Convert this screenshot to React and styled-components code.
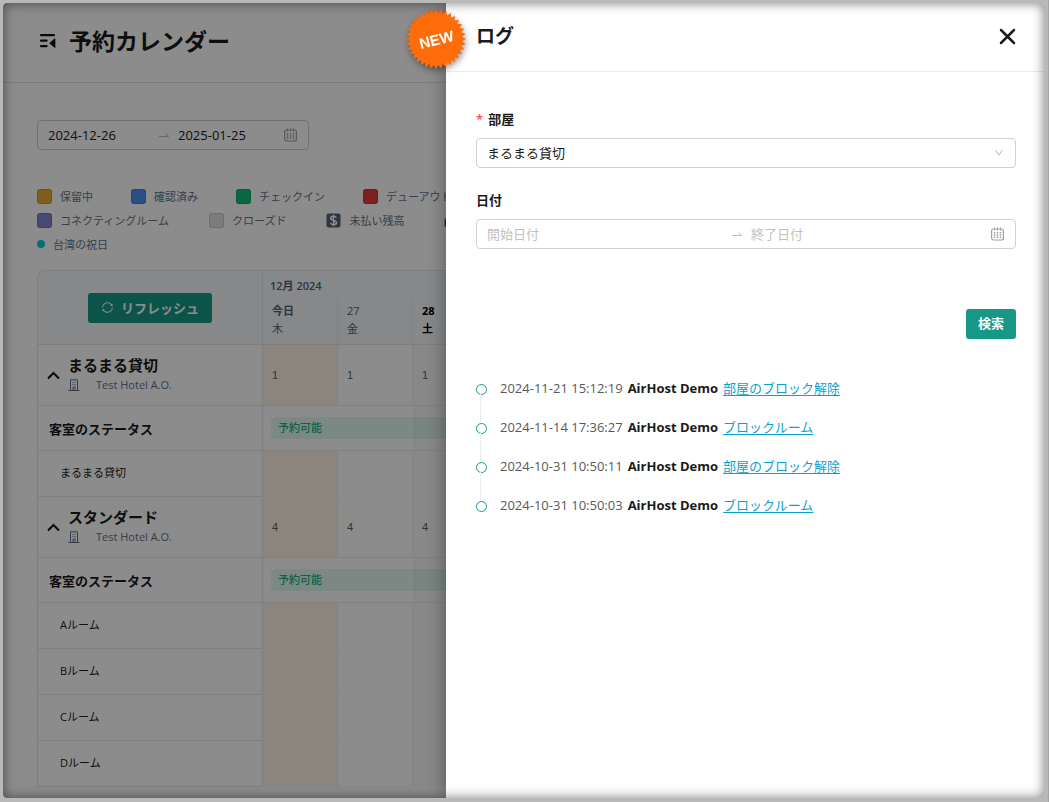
import React, {useState} from 'react'
import styled, {createGlobalStyle} from 'styled-components'
import {AiOutlineSync, AiOutlineDown} from 'react-icons/ai'

const GlobalStyle = createGlobalStyle`
  * {
    box-sizing: border-box;
  }
  body {
    margin: 0;
    font-family: "Open Sans", "Noto Sans CJK JP", sans-serif;
    font-size: 13px;
    color: #1a1a1a;
  }
  button, input, select {
    font-family: inherit;
    font-size: inherit;
    color: inherit;
  }
  h1, h2, p, ul {
    margin: 0;
    padding: 0;
  }
`

const Frame = styled.div`
  display: flex;
  min-height: 100vh;
  padding: 3px 4px 4px 3px;
  background: #b9b9b9;
  border-right: 1px solid #a6a6a6;
`

const Screen = styled.div`
  position: relative;
  flex: 1;
  min-width: 0;
  overflow: hidden;
  border-radius: 4px;
  background: #fff;
  &::after {
    content: "";
    position: absolute;
    inset: 0;
    border-radius: 4px;
    box-shadow: inset 0 0 12px rgba(0, 0, 0, .5);
    pointer-events: none;
  }
`

const PageHeader = styled.header`
  display: flex;
  align-items: center;
  gap: 13px;
  height: 80px;
  padding: 0 37px 4px;
  border-bottom: 1px solid #e2e2e2;
  h1 {
    font-size: 23px;
    line-height: 32px;
    font-weight: 700;
  }
`

const IconButton = styled.button`
  display: flex;
  padding: 0;
  border: 0;
  background: none;
  cursor: pointer;
`

const PageBody = styled.main`
  padding: 37px 0 11px 34px;
`

const Field = styled.div`
  display: flex;
  align-items: center;
  width: ${({$width}) => $width || '100%'};
  height: 30px;
  padding: 0 11px 0 10px;
  border: 1px solid #d0d0d0;
  border-radius: 4px;
  background: #fff;
  color: #1a1a1a;
  input, select {
    flex: 1;
    min-width: 0;
    height: 26px;
    padding: 0;
    border: 0;
    outline: 0;
    appearance: none;
    background: transparent;
  }
  input::placeholder {
    color: #bfbfbf;
    opacity: 1;
  }
  svg {
    flex: none;
  }
`

const Separator = styled.span`
  display: flex;
  width: 24px;
  padding-left: 4px;
`

const Legend = styled.ul`
  margin: 34px 0 14px;
  list-style: none;
  font-size: 11px;
  color: #64748b;
`

const LegendRow = styled.li`
  display: flex;
  gap: ${({$gap}) => $gap};
  height: 24px;
`

const LegendItem = styled.span`
  display: flex;
  flex: none;
  align-items: center;
  gap: 8px;
  white-space: nowrap;
`

const Swatch = styled.i`
  width: 15px;
  height: 15px;
  border: 1px solid rgba(0, 0, 0, .12);
  border-radius: 3px;
  background: ${({$color}) => $color};
`

const Dot = styled.i`
  width: 8px;
  height: 8px;
  border-radius: 50%;
  background: #06cbd8;
`

const Calendar = styled.table`
  width: 100%;
  table-layout: fixed;
  border: 1px solid #e3e6e9;
  border-width: 1px 0 0 1px;
  border-radius: 8px 0 0 0;
  border-spacing: 0;
  font-size: 11px;
  color: #556070;
  th, td {
    padding: 0;
    font-weight: 400;
    text-align: left;
  }
`

const RefreshCell = styled.th`
  border: 1px solid #e3e6e9;
  border-width: 0 1px 1px 0;
  border-radius: 8px 0 0 0;
  background: #f4f8fc;
`

const MonthCell = styled.th`
  height: 27px;
  background: #f4f8fc;
  && {
    padding-left: 7px;
    font-weight: 600;
  }
`

const DayHead = styled.th`
  height: 47px;
  border-right: 1px solid #e9ecef;
  border-bottom: 1px solid #e3e6e9;
  background: #f4f8fc;
  line-height: 18px;
  vertical-align: top;
  color: ${({$strong}) => $strong ? '#000' : 'inherit'};
  && {
    padding: 4px 0 0 9px;
    font-weight: ${({$strong}) => $strong ? 700 : 400};
  }
  b {
    display: block;
    font-weight: ${({$bold}) => $bold ? 700 : 'inherit'};
  }
`

const PrimaryButton = styled.button`
  display: flex;
  align-items: center;
  justify-content: center;
  gap: 7px;
  height: 30px;
  padding: 0 12px 3px;
  border: 0;
  border-radius: 3px;
  background: #179887;
  color: #fff;
  font-weight: 700;
  cursor: pointer;
`

const RefreshButton = styled(PrimaryButton)`
  width: 124px;
  margin: 0 auto;
  padding-bottom: 0;
  font-size: 13px;
`

const NameCell = styled.th`
  height: ${({$height}) => $height};
  border: 1px solid #e8eaec;
  border-width: 0 1px 1px 0;
`

const TypeName = styled.div`
  display: grid;
  grid-template-columns: 13px 1fr;
  column-gap: 8px;
  align-items: center;
  padding: 0 9px;
  strong {
    display: block;
    font-size: 15px;
    line-height: 20px;
    color: #1a1a1a;
  }
  p {
    display: flex;
    align-items: center;
    gap: 16px;
    line-height: 20px;
    color: #64748b;
  }
`

const StatusName = styled.strong`
  padding-left: 11px;
  font-size: 13px;
  color: #1a1a1a;
`

const RoomName = styled.div`
  padding: 0 0 3px 22px;
  color: #1a1a1a;
`

const tints = {today: '#fdf2e3', weekend: '#f7f7f7'}

const DayCell = styled.td`
  border-right: 1px solid #f0f0f0;
  border-bottom: 1px solid ${({$soft}) => $soft ? '#f9f9f9' : '#e9e9e9'};
  background: ${({$kind}) => tints[$kind] || '#fff'};
  font-family: "Liberation Sans", Arial, sans-serif;
  && {
    padding-left: 9px;
  }
`

const StatusCell = styled.td`
  border-bottom: 1px solid #e9e9e9;
  background: ${({$kind}) => tints[$kind] || '#fff'};
  && {
    padding-left: ${({$first}) => $first ? '8px' : 0};
  }
`

const StatusBar = styled.div`
  height: 22px;
  padding-left: 7px;
  border-radius: ${({$first}) => $first ? '4px 0 0 4px' : 0};
  background: rgba(20, 190, 130, .13);
  line-height: 22px;
  font-weight: 500;
  color: #14b37c;
`

const Mask = styled.div`
  position: absolute;
  inset: 0;
  background: rgba(0, 0, 0, .45);
`

const Drawer = styled.aside`
  position: absolute;
  top: 0;
  right: 0;
  bottom: 0;
  width: 598px;
  max-width: 100%;
  background: #fff;
  box-shadow: -4px 0 14px rgba(0, 0, 0, .25);
`

const DrawerHeader = styled.header`
  display: flex;
  align-items: center;
  justify-content: space-between;
  height: 69px;
  padding: 0 28px 2px 30px;
  border-bottom: 1px solid #ececec;
  h2 {
    font-size: 19px;
    line-height: 28px;
    font-weight: 600;
  }
`

const DrawerBody = styled.div`
  padding: 37px 28px 0 30px;
`

const FormItem = styled.div`
  display: flex;
  flex-direction: column;
  gap: 8px;
  margin-bottom: 22px;
  label {
    line-height: 21px;
    font-weight: 600;
  }
  em {
    margin-right: 5px;
    font-style: normal;
    color: #ff4d4f;
  }
`

const Actions = styled.div`
  display: flex;
  justify-content: flex-end;
  margin: 60px 0 29px;
`

const Timeline = styled.ul`
  list-style: none;
`

const TimelineItem = styled.li`
  position: relative;
  display: flex;
  align-items: center;
  gap: 5px;
  height: 39px;
  padding-left: 24px;
  line-height: 20px;
  white-space: nowrap;
  time {
    color: #595959;
  }
  a {
    color: #0d9fd0;
    text-underline-offset: 2px;
  }
  &::before {
    content: "";
    position: absolute;
    left: 0;
    top: 16px;
    width: 9px;
    height: 9px;
    border: 1px solid #179887;
    border-radius: 50%;
  }
  &:not(:last-child)::after {
    content: "";
    position: absolute;
    left: 4px;
    top: 26px;
    width: 1px;
    height: 28px;
    background: #ececec;
  }
`

const Badge = styled.div`
  position: absolute;
  top: 6px;
  right: 578px;
  display: grid;
  place-items: center;
  width: 60px;
  height: 60px;
  filter: drop-shadow(1px 3px 3px rgba(0, 0, 0, .4));
  svg, span {
    grid-area: 1 / 1;
  }
  span {
    font-family: "Liberation Sans", Arial, sans-serif;
    font-size: 15px;
    font-weight: 700;
    color: #fff;
    transform: rotate(-14deg);
  }
`

const FoldIcon = () => (
  <svg width="16" height="16" viewBox="0 0 16 16" fill="#111">
    <rect x="0" y="1" width="15" height="2.2" rx="1" />
    <rect x="0" y="6.6" width="7.6" height="2.2" rx="1" />
    <rect x="0" y="12" width="7.6" height="2.2" rx="1" />
    <path d="M9.2 10.2 14.6 5.6q.8-.5.8.5v8.200q0 1-.8.5z" />
  </svg>
)

const CalendarIcon = () => (
  <svg width="13" height="14" viewBox="0 0 13 14" fill="none" stroke="#a0a0a0">
    <rect x=".6" y="2" width="11.800" height="11" rx="2" strokeWidth="1.200" />
    <path d="M3.500.5v3M6.500.5v3M9.500.5v3" />
    <path d="M2.800 5.700h8M2.800 8h8M2.800 10.300h8" strokeWidth="1.400" strokeDasharray="1.500 1.450" />
  </svg>
)

const ArrowIcon = () => (
  <svg width="12" height="8" viewBox="0 0 12 8" fill="none" stroke="#bdbdbd">
    <path d="M1 5.500h9.500L7.200 2.500" />
  </svg>
)

const UpIcon = () => (
  <svg width="13" height="9" viewBox="0 0 13 9" fill="none" stroke="#111" strokeWidth="2">
    <path d="M1 7.500 6.500 2 12 7.500" />
  </svg>
)

const BuildingIcon = () => (
  <svg width="12" height="12" viewBox="0 0 12 12" fill="none" stroke="#64748b">
    <path d="M.5 11.500h11M2.500 11V.8h7V11M4.500 3.500h1M6.500 3.500h1M4.500 5.500h1M6.500 5.500h1M5 11V8h2v3" />
  </svg>
)

const CloseIcon = () => (
  <svg width="17" height="17" viewBox="0 0 17 17" stroke="#1a1a1a" strokeWidth="2.500" strokeLinecap="round">
    <path d="m2 2 13 13M15 2 2 15" />
  </svg>
)

const DollarIcon = () => (
  <svg width="15" height="15" viewBox="0 0 15 15">
    <rect x=".5" y=".5" width="14" height="14" rx="2" fill="#566375" />
    <path d="M7.500 1.800v11.400M10.400 4.700C9.800 3.600 8.900 3.300 7.500 3.300c-1.800 0-2.800.7-2.800 2 0 2.900 5.800 1.300 5.800 4.300 0 1.300-1.200 2.100-3 2.100-1.500 0-2.600-.5-3.100-1.700" fill="none" stroke="#fff" strokeWidth="1.500" />
  </svg>
)

const BagIcon = () => (
  <svg width="15" height="15" viewBox="0 0 15 15" fill="#475569">
    <path d="M5 5V3.500h5V5h3q1.500 0 1.500 1.500v6q0 1.500-1.500 1.500H2q-1.500 0-1.500-1.500v-6Q.5 5 2 5zm1 0h3v-.5H6z" />
  </svg>
)

// star outline with alternating outer and inner radius
const burst = Array.from({length: 72}, (_, i) => {
  const r = i % 2 ? 26 : 30
  const a = (i * Math.PI) / 36
  return `${30 + r * Math.sin(a)},${30 - r * Math.cos(a)}`
}).join(' ')

const legend = [
  {
    gap: '38px',
    items: [
      {label: '保留中', color: '#eba932'},
      {label: '確認済み', color: '#4f8ff5'},
      {label: 'チェックイン', color: '#10bd7c'},
      {label: 'デューアウト', color: '#e03c3f'},
    ],
  },
  {
    gap: '40px',
    items: [
      {label: 'コネクティングルーム', color: '#8285d0'},
      {label: 'クローズド', color: '#e2e2e2'},
      {label: '未払い残高', icon: <DollarIcon />},
      {label: '', icon: <BagIcon />},
    ],
  },
  {gap: '38px', items: [{label: '台湾の祝日', icon: <Dot />}]},
]

const days = [
  {date: '今日', week: '木', kind: 'today'},
  {date: '27', week: '金', kind: 'day'},
  {date: '28', week: '土', kind: 'weekend'},
]

const types = [
  {name: 'まるまる貸切', count: 1, rooms: ['まるまる貸切']},
  {name: 'スタンダード', count: 4, rooms: ['Aルーム', 'Bルーム', 'Cルーム', 'Dルーム']},
]

const logs = [
  {time: '2024-11-21 15:12:19', action: '部屋のブロック解除'},
  {time: '2024-11-14 17:36:27', action: 'ブロックルーム'},
  {time: '2024-10-31 10:50:11', action: '部屋のブロック解除'},
  {time: '2024-10-31 10:50:03', action: 'ブロックルーム'},
]

const RoomType = ({type}) => {
  const [open, setOpen] = useState(true)

  return (
    <tbody>
      <tr>
        <NameCell $height="61px">
          <TypeName>
            <IconButton aria-label={type.name} onClick={() => setOpen(!open)}><UpIcon /></IconButton>
            <div>
              <strong>{type.name}</strong>
              <p><BuildingIcon />Test Hotel A.O.</p>
            </div>
          </TypeName>
        </NameCell>
        {days.map((day) => <DayCell key={day.date} $kind={day.kind}>{type.count}</DayCell>)}
      </tr>
      {open && (
        <>
          <tr>
            <NameCell $height="45px"><StatusName>客室のステータス</StatusName></NameCell>
            <StatusCell colSpan={2} $first><StatusBar $first>予約可能</StatusBar></StatusCell>
            <StatusCell $kind="weekend"><StatusBar /></StatusCell>
          </tr>
          {type.rooms.map((room) => (
            <tr key={room}>
              <NameCell $height="46px"><RoomName>{room}</RoomName></NameCell>
              {days.map((day) => <DayCell key={day.date} $kind={day.kind} $soft />)}
            </tr>
          ))}
        </>
      )}
    </tbody>
  )
}

const LogDrawer = () => (
  <Drawer>
    <DrawerHeader>
      <h2>ログ</h2>
      <IconButton aria-label="閉じる"><CloseIcon /></IconButton>
    </DrawerHeader>
    <DrawerBody>
      <FormItem>
        <label htmlFor="room"><em>*</em>部屋</label>
        <Field>
          <select id="room" defaultValue="まるまる貸切">
            <option>まるまる貸切</option>
          </select>
          <AiOutlineDown size={10} color="#a0a0a0" />
        </Field>
      </FormItem>
      <FormItem>
        <label htmlFor="start">日付</label>
        <Field>
          <input id="start" placeholder="開始日付" />
          <Separator><ArrowIcon /></Separator>
          <input aria-label="終了日付" placeholder="終了日付" />
          <CalendarIcon />
        </Field>
      </FormItem>
      <Actions><PrimaryButton>検索</PrimaryButton></Actions>
      <Timeline>
        {logs.map((log) => (
          <TimelineItem key={log.time}>
            <time>{log.time}</time>
            <strong>AirHost Demo</strong>
            <a href="#log">{log.action}</a>
          </TimelineItem>
        ))}
      </Timeline>
    </DrawerBody>
  </Drawer>
)

const App = () => {
  return (
    <>
      <GlobalStyle />
      <Frame>
        <Screen>
          <PageHeader>
            <IconButton aria-label="メニュー"><FoldIcon /></IconButton>
            <h1>予約カレンダー</h1>
          </PageHeader>
          <PageBody>
            <Field $width="272px">
              <input aria-label="開始日付" defaultValue="2024-12-26" />
              <Separator><ArrowIcon /></Separator>
              <input aria-label="終了日付" defaultValue="2025-01-25" />
              <CalendarIcon />
            </Field>
            <Legend>
              {legend.map((row, index) => (
                <LegendRow key={index} $gap={row.gap}>
                  {row.items.map((item) => (
                    <LegendItem key={item.label}>
                      {item.icon || <Swatch $color={item.color} />}
                      {item.label}
                    </LegendItem>
                  ))}
                </LegendRow>
              ))}
            </Legend>
            <Calendar>
              <colgroup>
                <col width="225" />
                <col width="75" />
                <col width="75" />
                <col />
              </colgroup>
              <thead>
                <tr>
                  <RefreshCell rowSpan={2}>
                    <RefreshButton><AiOutlineSync size={13} />リフレッシュ</RefreshButton>
                  </RefreshCell>
                  <MonthCell colSpan={3}>12月 2024</MonthCell>
                </tr>
                <tr>
                  {days.map((day) => (
                    <DayHead key={day.date} $strong={day.kind === 'weekend'} $bold={day.kind !== 'day'}>
                      <b>{day.date}</b>
                      {day.week}
                    </DayHead>
                  ))}
                </tr>
              </thead>
              {types.map((type) => <RoomType key={type.name} type={type} />)}
            </Calendar>
          </PageBody>
          <Mask />
          <LogDrawer />
          <Badge>
            <svg width="60" height="60" viewBox="0 0 60 60"><polygon points={burst} fill="#ff6c0a" /></svg>
            <span>NEW</span>
          </Badge>
        </Screen>
      </Frame>
    </>
  )
}

export default App
